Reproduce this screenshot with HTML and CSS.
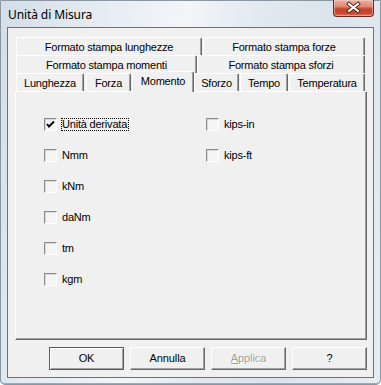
FILE: index.html
```html
<!DOCTYPE html>
<html lang="it">
<head>
<meta charset="utf-8">
<title>Unità di Misura</title>
<link rel="stylesheet" href="styles.css">
</head>
<body>
<div class="window">
  <div class="titlebar">
    <span class="title">Unità di Misura</span>
    <div class="close">
      <svg width="41" height="17" viewBox="0 0 41 17">
        <path d="M16 5 L25 12 M25 5 L16 12" stroke="#5a2418" stroke-width="4" stroke-linecap="square" fill="none"/>
        <path d="M16 5 L25 12 M25 5 L16 12" stroke="#ffffff" stroke-width="2" stroke-linecap="square" fill="none"/>
      </svg>
    </div>
  </div>
  <div class="client">
    <div class="tabs">
      <div class="tabrow">
        <div class="tab t-fsl">Formato stampa lunghezze</div>
        <div class="tab t-fsf">Formato stampa forze</div>
      </div>
      <div class="tabrow">
        <div class="tab t-fsm">Formato stampa momenti</div>
        <div class="tab t-fss">Formato stampa sforzi</div>
      </div>
      <div class="tabrow">
        <div class="tab t-lun">Lunghezza</div>
        <div class="tab t-for">Forza</div>
        <div class="tab t-mom selected">Momento</div>
        <div class="tab t-sfo">Sforzo</div>
        <div class="tab t-tem">Tempo</div>
        <div class="tab t-tpr">Temperatura</div>
      </div>
    </div>
    <div class="panel">
      <div class="col col-left">
        <div class="cb">
          <span class="box">
            <svg width="11" height="11" viewBox="0 0 11 11"><path d="M2 5 L4 7.5 L9 2.5" stroke="#000" stroke-width="1.9" fill="none"/></svg>
          </span>
          <span class="lbl focus">Unità derivata</span>
        </div>
        <div class="cb"><span class="box"></span><span class="lbl">Nmm</span></div>
        <div class="cb"><span class="box"></span><span class="lbl">kNm</span></div>
        <div class="cb"><span class="box"></span><span class="lbl">daNm</span></div>
        <div class="cb"><span class="box"></span><span class="lbl">tm</span></div>
        <div class="cb"><span class="box"></span><span class="lbl">kgm</span></div>
      </div>
      <div class="col">
        <div class="cb"><span class="box"></span><span class="lbl">kips-in</span></div>
        <div class="cb"><span class="box"></span><span class="lbl">kips-ft</span></div>
      </div>
    </div>
    <div class="buttons">
      <div class="btn default">OK</div>
      <div class="btn">Annulla</div>
      <div class="btn disabled"><u>A</u>pplica</div>
      <div class="btn">?</div>
    </div>
  </div>
</div>
</body>
</html>
```
FILE: styles.css
```css
* { box-sizing: border-box; }
html, body { margin: 0; padding: 0; background: #ffffff; }
body { width: 381px; height: 385px; overflow: hidden; }

.window {
  width: 381px;
  height: 385px;
  border: 1px solid #8a96a2;
  border-radius: 0 0 5px 5px;
  background: linear-gradient(100deg, #d3dee8 0%, #e7edf3 25%, #f3f6f9 42%, #e2e9ef 58%, #dbe4ec 75%, #e6edf3 100%);
  box-shadow: inset 0 -1px 0 #79b6d2;
  display: flex;
  flex-direction: column;
}

.titlebar {
  height: 26px;
  display: flex;
  justify-content: space-between;
  align-items: flex-start;
  flex: none;
}
.title {
  font-family: "Noto Sans", "DejaVu Sans", sans-serif;
  font-size: 12px;
  line-height: 16px;
  color: #000;
  padding: 6px 0 0 7px;
  letter-spacing: -0.1px;
}
.close {
  width: 41px;
  height: 17px;
  margin: -1px 6px 0 0;
  border: 1px solid #6e2a1d;
  border-top: none;
  border-radius: 0 0 4px 4px;
  background: linear-gradient(180deg, #e9b1a3 0%, #de8a74 40%, #c9462f 55%, #c4442e 80%, #d9765c 100%);
  box-shadow: inset 0 0 0 1px rgba(255, 220, 210, 0.45);
}
.close svg { display: block; margin: -1px 0 0 -1px; }

.client {
  flex: 1;
  margin: 0 6px 6px 6px;
  border: 1px solid #67727c;
  background: #f0f0f0;
  padding: 9px 6px 0 7px;
  font-family: "Liberation Sans", Arial, sans-serif;
  font-size: 11px;
  color: #000;
}

.tabs { padding-left: 1px; }
.tabrow {
  display: flex;
  height: 18px;
}
.tab {
  height: 18px;
  border-top: 1px solid #ffffff;
  border-left: 1px solid #ffffff;
  border-right: 1px solid #696969;
  border-radius: 2px 2px 0 0;
  box-shadow: inset -1px 0 0 #a0a0a0;
  background: #f0f0f0;
  padding-top: 1px;
  line-height: 16px;
  text-align: center;
  white-space: nowrap;
  letter-spacing: -0.2px;
}
.tab.selected {
  height: 21px;
  margin-top: -2px;
  margin-bottom: -1px;
  position: relative;
  z-index: 1;
}

.t-fsl { width: 186px; margin-right: 1px; }
.t-fsf { width: 162px; }
.t-fsm { width: 181px; }
.t-fss { width: 168px; }
.t-lun { width: 68px; margin-right: 2px; }
.t-for { width: 45px; margin-right: 1px; }
.t-mom { width: 62px; }
.t-sfo { width: 45px; margin-right: 1px; }
.t-tem { width: 48px; margin-right: 1px; }
.t-tpr { width: 76px; }

.panel {
  width: 352px;
  height: 249px;
  border-top: 1px solid #ffffff;
  border-left: 1px solid #ffffff;
  border-right: 1px solid #696969;
  border-bottom: 1px solid #696969;
  box-shadow: inset -1px -1px 0 #a0a0a0;
  padding: 26px 0 0 28px;
  display: flex;
}
.col {
  display: flex;
  flex-direction: column;
  gap: 18px;
}
.col-left { width: 162px; }
.cb {
  display: flex;
  align-items: flex-start;
  height: 13px;
}
.box {
  width: 13px;
  height: 13px;
  flex: none;
  border-top: 1px solid #8c8c8c;
  border-left: 1px solid #8c8c8c;
  border-right: 1px solid #ffffff;
  border-bottom: 1px solid #ffffff;
  background: #f5f5f5;
  box-shadow: inset 1px 1px 0 #d8d8d8;
}
.box svg { display: block; }
.lbl {
  margin-left: 4px;
  border: 1px solid transparent;
  line-height: 11px;
  height: 13px;
  padding-right: 1px;
  white-space: nowrap;
  letter-spacing: -0.2px;
}
.lbl.focus { border: 1px dotted #000; }

.buttons {
  display: flex;
  justify-content: flex-end;
  gap: 6px;
  margin-top: 7px;
}
.btn {
  width: 75px;
  height: 23px;
  border-top: 1px solid #ffffff;
  border-left: 1px solid #ffffff;
  border-right: 1px solid #696969;
  border-bottom: 1px solid #696969;
  box-shadow: inset -1px -1px 0 #a0a0a0;
  background: #f0f0f0;
  text-align: center;
  line-height: 20px;
  letter-spacing: -0.1px;
}
.btn.default {
  border: 1px solid #5a5a5a;
  box-shadow: inset 1px 1px 0 #ffffff, inset -1px -1px 0 #a0a0a0;
}
.btn.disabled {
  color: #a0a0a0;
  text-shadow: 1px 1px 0 #ffffff;
}
.btn.disabled u { text-decoration-color: #a0a0a0; }
```
